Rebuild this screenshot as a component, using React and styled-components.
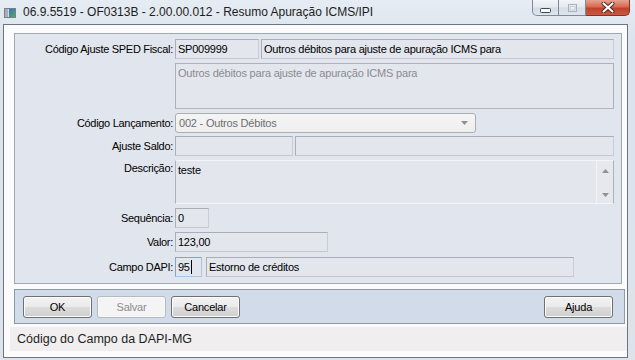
import React from "react";
import styled, { createGlobalStyle } from "styled-components";

const GlobalStyle = createGlobalStyle`
  html, body {
    margin: 0;
    padding: 0;
    background: #dde3eb;
  }
  body {
    width: 635px;
    height: 360px;
    overflow: hidden;
    font-family: "Liberation Sans", Arial, sans-serif;
  }
  * { box-sizing: border-box; }
`;

const Window = styled.div`
  width: 635px;
  height: 360px;
  display: flex;
  flex-direction: column;
  background: linear-gradient(#e6ecf3, #dde3eb 40px, #dee3ea);
`;

const TitleBar = styled.div`
  height: 24px;
  flex-shrink: 0;
  display: flex;
  align-items: flex-start;
`;

const AppIcon = styled.svg`
  margin: 8px 0 0 4px;
  flex-shrink: 0;
`;

const Title = styled.span`
  margin: 5px 0 0 7px;
  font-size: 12px;
  line-height: 14px;
  color: #1b1d22;
  white-space: nowrap;
`;

const Controls = styled.div`
  margin-left: auto;
  margin-right: 5px;
  display: flex;
`;

const ControlButton = styled.div`
  width: ${(p) => (p.$variant === "close" ? 44 : 27)}px;
  height: 16px;
  display: flex;
  align-items: center;
  justify-content: center;
  border: 1px solid ${(p) => (p.$variant === "close" ? "#7c3628" : "#7f8a99")};
  border-top: none;
  border-left-width: ${(p) => (p.$variant === "min" ? 1 : 0)}px;
  border-radius: ${(p) =>
    p.$variant === "min" ? "0 0 0 5px" : p.$variant === "close" ? "0 0 5px 0" : "0"};
  background: ${(p) =>
    p.$variant === "close"
      ? "linear-gradient(#e6a292, #d66a55 45%, #c2412a 55%, #c95a40)"
      : "linear-gradient(#f2f5f9, #e4e9f0 45%, #d6dde7 55%, #dfe5ed)"};
`;

const Client = styled.div`
  flex: 1;
  margin: 0 7px 2px 3px;
  border: 1px solid #6e7580;
  background: #fbfbfc;
  display: flex;
  flex-direction: column;
`;

const Panel = styled.div`
  margin: 8px 5px 0 10px;
  border: 1px solid #a2a8b1;
  background: #e1e5ed;
  padding: 5px 7px 6px 0;
  display: flex;
  flex-direction: column;
`;

const Row = styled.div`
  display: grid;
  grid-template-columns: 158px 1fr;
  column-gap: 2px;
  margin-top: ${(p) => p.$gap || 0}px;
  height: ${(p) => p.$h || 20}px;
`;

const Label = styled.div`
  font-size: 11px;
  line-height: 14px;
  letter-spacing: -0.3px;
  color: #000;
  text-align: right;
  white-space: nowrap;
  align-self: ${(p) => (p.$top ? "start" : "center")};
  padding-top: ${(p) => (p.$top ? 1 : 0)}px;
`;

const Fields = styled.div`
  display: flex;
  gap: ${(p) => p.$gap || 2}px;
  height: 100%;
`;

const Field = styled.div`
  width: ${(p) => (p.$w ? `${p.$w}px` : "auto")};
  flex: ${(p) => (p.$w ? "none" : 1)};
  height: 100%;
  border: 1px solid ${(p) => (p.$focus ? "#7fa4d2" : "#abaeb5")};
  border-right-color: ${(p) => (p.$focus ? "#a9c4e4" : "#c9ccd2")};
  border-bottom-color: ${(p) => (p.$focus ? "#a9c4e4" : "#c4c7cd")};
  background: #e3e6ed;
  padding: 0 2px;
  font-size: 11px;
  line-height: 18px;
  letter-spacing: -0.25px;
  color: ${(p) => (p.$muted ? "#8a8c90" : "#000")};
  white-space: nowrap;
  overflow: hidden;
  display: flex;
  align-items: center;
`;

const Caret = styled.span`
  display: inline-block;
  width: 1px;
  height: 14px;
  background: #000;
  margin-left: 1px;
`;

const TextArea = styled.div`
  flex: 1;
  height: 100%;
  border: 1px solid #aeb1b8;
  border-top-color: ${(p) => (p.$light ? "#f4f5f8" : "#aeb1b8")};
  border-bottom-color: ${(p) => (p.$light ? "#f4f5f8" : "#b4b7bd")};
  background: #e3e6ed;
  display: flex;
`;

const AreaText = styled.div`
  flex: 1;
  padding: 2px 2px 0;
  font-size: 11px;
  line-height: 14px;
  letter-spacing: -0.2px;
  color: ${(p) => (p.$muted ? "#8a8c90" : "#000")};
`;

const ScrollBar = styled.div`
  width: 17px;
  border-left: 1px solid #f2f3f6;
  background: #e6e8ee;
  display: flex;
  flex-direction: column;
  justify-content: space-between;
  align-items: center;
  padding: 8px 0 6px;
`;

const Combo = styled.div`
  width: 301px;
  height: 100%;
  border: 1px solid #acaeb2;
  border-radius: 3px;
  background: linear-gradient(#f4f4f4, #efefef);
  padding: 0 7px 0 3px;
  display: flex;
  align-items: center;
  justify-content: space-between;
  font-size: 11px;
  letter-spacing: -0.2px;
  color: #6d6e70;
`;

const ButtonBar = styled.div`
  margin: 5px 2px 0 10px;
  border: 1px solid #8e98a6;
  background: #d2dbe9;
  padding: 6px 11px 5px 8px;
  display: flex;
  gap: 5px;
`;

const Button = styled.div`
  width: 69px;
  height: 22px;
  border: 1px solid ${(p) => (p.$disabled ? "#b6babf" : "#707070")};
  border-radius: 3px;
  background: ${(p) =>
    p.$disabled
      ? "#f4f4f4"
      : "linear-gradient(#f2f2f2, #ebebeb 50%, #dddddd 50%, #cfcfcf)"};
  box-shadow: inset 0 0 0 1px ${(p) => (p.$disabled ? "#f8f8f8" : "#fcfcfc")};
  display: flex;
  align-items: center;
  justify-content: center;
  font-size: 11px;
  letter-spacing: -0.2px;
  color: ${(p) => (p.$disabled ? "#8c8c8c" : "#000")};
  margin-left: ${(p) => (p.$push ? "auto" : "0")};
`;

const StatusBar = styled.div`
  margin: 3px 0 0 6px;
  height: 24px;
  background: #f0eeee;
  padding-left: 7px;
  display: flex;
  align-items: center;
  font-size: 12.5px;
  color: #1e1e1e;
`;

const Arrow = ({ up }) => (
  <svg width="7" height="4" viewBox="0 0 7 4">
    <path d={up ? "M0 4 L3.5 0 L7 4 Z" : "M0 0 L7 0 L3.5 4 Z"} fill="#8f9196" />
  </svg>
);

export default function App() {
  return (
    <>
      <GlobalStyle />
      <Window>
        <TitleBar>
          <AppIcon width="12" height="10" viewBox="0 0 12 10">
            <defs>
              <linearGradient id="ic" x1="0" y1="0" x2="1" y2="1">
                <stop offset="0" stopColor="#2f74c9" />
                <stop offset="1" stopColor="#4fae5a" />
              </linearGradient>
            </defs>
            <rect x="0.5" y="0.5" width="11" height="9" fill="#d6d9de" stroke="#7a8089" />
            <rect x="1" y="1" width="3" height="8" fill="#a9aeb6" />
            <rect x="5" y="1" width="6" height="8" fill="url(#ic)" />
          </AppIcon>
          <Title>06.9.5519 - OF0313B - 2.00.00.012 - Resumo Apuração ICMS/IPI</Title>
          <Controls>
            <ControlButton $variant="min">
              <svg width="11" height="5" viewBox="0 0 11 5" style={{ marginTop: 5 }}>
                <rect x="0.5" y="0.5" width="10" height="4" rx="1" fill="#fff" stroke="#3b4657" />
              </svg>
            </ControlButton>
            <ControlButton $variant="max">
              <svg width="9" height="8" viewBox="0 0 9 8">
                <rect x="0.5" y="0.5" width="8" height="7" fill="#eef1f5" stroke="#a8b1bd" />
                <rect x="2" y="2.5" width="5" height="3.5" fill="none" stroke="#c3c9d2" />
              </svg>
            </ControlButton>
            <ControlButton $variant="close">
              <svg width="14" height="11" viewBox="0 0 14 11">
                <path d="M2.5 1.5 L11.5 9.5 M11.5 1.5 L2.5 9.5" stroke="#4a2018" strokeWidth="4" strokeLinecap="round" />
                <path d="M2.5 1.5 L11.5 9.5 M11.5 1.5 L2.5 9.5" stroke="#ffffff" strokeWidth="2.2" strokeLinecap="round" />
              </svg>
            </ControlButton>
          </Controls>
        </TitleBar>

        <Client>
          <Panel>
            <Row>
              <Label>Código Ajuste SPED Fiscal:</Label>
              <Fields>
                <Field $w={84}>SP009999</Field>
                <Field>Outros débitos para ajuste de apuração ICMS para</Field>
              </Fields>
            </Row>
            <Row $gap={4} $h={46}>
              <span />
              <Fields>
                <TextArea>
                  <AreaText $muted>Outros débitos para ajuste de apuração ICMS para</AreaText>
                </TextArea>
              </Fields>
            </Row>
            <Row $gap={4}>
              <Label>Código Lançamento:</Label>
              <Fields>
                <Combo>
                  <span>002 - Outros Débitos</span>
                  <Arrow />
                </Combo>
              </Fields>
            </Row>
            <Row $gap={3}>
              <Label>Ajuste Saldo:</Label>
              <Fields>
                <Field $w={118} />
                <Field />
              </Fields>
            </Row>
            <Row $gap={4} $h={44}>
              <Label $top>Descrição:</Label>
              <Fields>
                <TextArea $light>
                  <AreaText>teste</AreaText>
                  <ScrollBar>
                    <Arrow up />
                    <Arrow />
                  </ScrollBar>
                </TextArea>
              </Fields>
            </Row>
            <Row $gap={4}>
              <Label>Sequência:</Label>
              <Fields>
                <Field $w={34}>0</Field>
              </Fields>
            </Row>
            <Row $gap={4}>
              <Label>Valor:</Label>
              <Fields>
                <Field $w={153}>123,00</Field>
              </Fields>
            </Row>
            <Row $gap={5}>
              <Label>Campo DAPI:</Label>
              <Fields $gap={4}>
                <Field $w={27} $focus>
                  95<Caret />
                </Field>
                <Field $w={368}>Estorno de créditos</Field>
              </Fields>
            </Row>
          </Panel>

          <ButtonBar>
            <Button>OK</Button>
            <Button $disabled>Salvar</Button>
            <Button>Cancelar</Button>
            <Button $push>Ajuda</Button>
          </ButtonBar>

          <StatusBar>Código do Campo da DAPI-MG</StatusBar>
        </Client>
      </Window>
    </>
  );
}
